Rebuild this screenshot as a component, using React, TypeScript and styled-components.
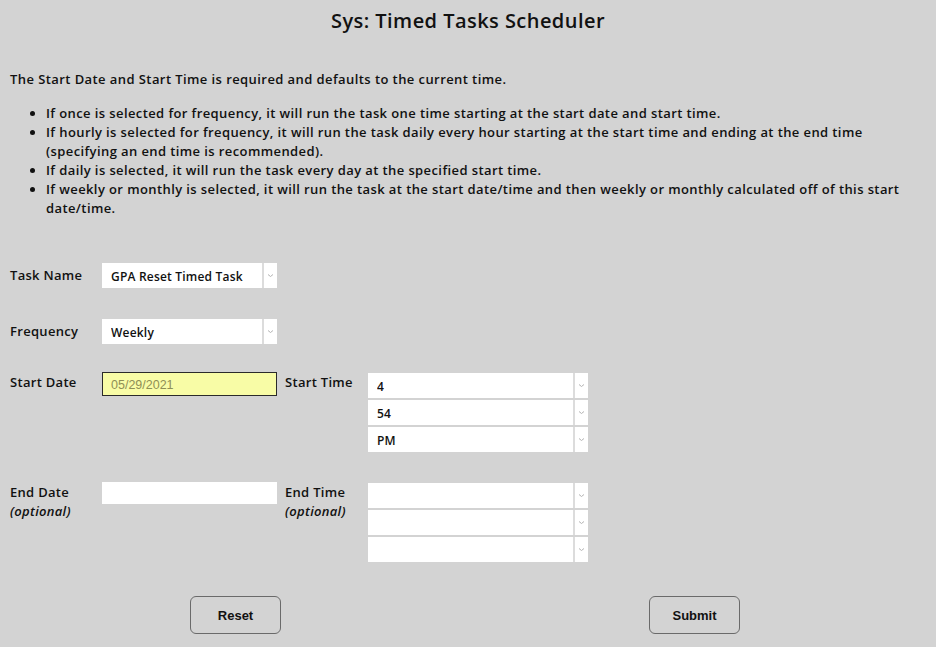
import React, { useState } from "react";
import styled, { createGlobalStyle } from "styled-components";

const GlobalStyle = createGlobalStyle`
    body {
        margin: 0;
        background-color: #d3d3d3;
        font-family: "Open Sans", Lato, sans-serif;
        color: #111111;
    }
`;

const Page = styled.div`
    width: 936px;
    min-height: 647px;
    box-sizing: border-box;
    padding: 0 10px;
`;

const Title = styled.h1`
    margin: 0;
    padding-top: 8px;
    height: 25px;
    line-height: 25px;
    text-align: center;
    font-size: 20px;
    font-weight: 600;
    letter-spacing: 0.45px;
`;

const Intro = styled.p`
    margin: 37px 0 0;
    font-size: 13px;
    font-weight: 600;
    line-height: 19px;
    letter-spacing: 0.42px;
`;

const Notes = styled.ul`
    margin: 15px 0 0;
    padding-left: 36px;
    font-size: 13px;
    font-weight: 600;
    line-height: 19px;
    letter-spacing: 0.4px;
`;

const Form = styled.div`
    display: flex;
    flex-direction: column;
    margin-top: 45px;
`;

const Row = styled.div<{ $top?: number }>`
    display: grid;
    grid-template-columns: 92px 175px 91px 220px;
    align-items: start;
    margin-top: ${({ $top }) => $top ?? 0}px;
`;

const Label = styled.div<{ $pad?: number }>`
    padding-top: ${({ $pad }) => $pad ?? 1}px;
    font-size: 13px;
    font-weight: 600;
    line-height: 19px;
    letter-spacing: 0.3px;
`;

const SideLabel = styled(Label)`
    padding-left: 8px;
`;

const Optional = styled.span`
    display: block;
    font-style: italic;
`;

const SelectStack = styled.div`
    display: flex;
    flex-direction: column;
    gap: 2px;
    margin-top: 1px;
`;

const SelectBox = styled.div`
    display: flex;
    height: 25px;
    background-color: #ffffff;
`;

const NativeSelect = styled.select`
    flex: 1;
    min-width: 0;
    appearance: none;
    border: none;
    outline: none;
    background: transparent;
    padding: 2px 0 0 9px;
    font-family: "Open Sans", Lato, sans-serif;
    font-size: 12px;
    font-weight: 600;
    letter-spacing: 0.2px;
    color: #111111;
`;

const ArrowCell = styled.div`
    width: 13px;
    display: flex;
    align-items: center;
    justify-content: center;
    border-left: 2px solid #dcdcdc;
`;

const DateInput = styled.input<{ $filled?: boolean }>`
    box-sizing: border-box;
    width: 175px;
    height: ${({ $filled }) => ($filled ? 24 : 22)}px;
    margin: 0;
    padding: 1px 0 0 8px;
    border: ${({ $filled }) => ($filled ? "1px solid #2a2a2a" : "none")};
    background-color: ${({ $filled }) => ($filled ? "#f8fca6" : "#ffffff")};
    color: #8f8f55;
    font-family: "Liberation Sans", Arial, sans-serif;
    font-size: 12.5px;
    outline: none;
`;

const ButtonRow = styled.div`
    display: flex;
    gap: 368px;
    margin: 34px 0 0 180px;
`;

const Button = styled.button`
    width: 91px;
    height: 38px;
    background-color: transparent;
    border: 1px solid #6a6a6a;
    border-radius: 6px;
    color: #111111;
    font-family: "Liberation Sans", Arial, sans-serif;
    font-size: 13px;
    font-weight: 700;
    cursor: pointer;
`;

const Chevron = () => (
    <svg width="7" height="5" viewBox="0 0 7 5">
        <path d="M1 1.5 L3.5 3.5 L6 1.5" fill="none" stroke="#b4b4b4" strokeWidth="1" />
    </svg>
);

interface DropProps {
    value: string;
    options: string[];
    onChange?: (v: string) => void;
}

const Drop: React.FC<DropProps> = ({ value, options, onChange }) => (
    <SelectBox>
        <NativeSelect value={value} onChange={(e) => onChange?.(e.target.value)}>
            {options.map((o) => (
                <option key={o} value={o}>
                    {o}
                </option>
            ))}
        </NativeSelect>
        <ArrowCell>
            <Chevron />
        </ArrowCell>
    </SelectBox>
);

const HOURS = ["", ...Array.from({ length: 12 }, (_, i) => String(i + 1))];
const MINUTES = ["", ...Array.from({ length: 60 }, (_, i) => String(i))];
const MERIDIEM = ["", "AM", "PM"];
const FREQUENCIES = ["Once", "Hourly", "Daily", "Weekly", "Monthly"];

const App: React.FC = () => {
    const [task, setTask] = useState("GPA Reset Timed Task");
    const [frequency, setFrequency] = useState("Weekly");
    const [start, setStart] = useState({ h: "4", m: "54", p: "PM" });
    const [end, setEnd] = useState({ h: "", m: "", p: "" });

    return (
        <Page>
            <GlobalStyle />
            <Title>Sys: Timed Tasks Scheduler</Title>
            <Intro>The Start Date and Start Time is required and defaults to the current time.</Intro>
            <Notes>
                <li>If once is selected for frequency, it will run the task one time starting at the start date and start time.</li>
                <li>
                    If hourly is selected for frequency, it will run the task daily every hour starting at the start time and ending at the end time
                    (specifying an end time is recommended).
                </li>
                <li>If daily is selected, it will run the task every day at the specified start time.</li>
                <li>
                    If weekly or monthly is selected, it will run the task at the start date/time and then weekly or monthly calculated off of this start
                    date/time.
                </li>
            </Notes>

            <Form>
                <Row>
                    <Label $pad={3}>Task Name</Label>
                    <Drop value={task} options={["GPA Reset Timed Task"]} onChange={setTask} />
                </Row>
                <Row $top={31}>
                    <Label $pad={3}>Frequency</Label>
                    <Drop value={frequency} options={FREQUENCIES} onChange={setFrequency} />
                </Row>
                <Row $top={28}>
                    <Label>Start Date</Label>
                    <DateInput $filled defaultValue="05/29/2021" />
                    <SideLabel>Start Time</SideLabel>
                    <SelectStack>
                        <Drop value={start.h} options={HOURS} onChange={(h) => setStart({ ...start, h })} />
                        <Drop value={start.m} options={MINUTES} onChange={(m) => setStart({ ...start, m })} />
                        <Drop value={start.p} options={MERIDIEM} onChange={(p) => setStart({ ...start, p })} />
                    </SelectStack>
                </Row>
                <Row $top={30}>
                    <Label>
                        End Date
                        <Optional>(optional)</Optional>
                    </Label>
                    <DateInput />
                    <SideLabel>
                        End Time
                        <Optional>(optional)</Optional>
                    </SideLabel>
                    <SelectStack>
                        <Drop value={end.h} options={HOURS} onChange={(h) => setEnd({ ...end, h })} />
                        <Drop value={end.m} options={MINUTES} onChange={(m) => setEnd({ ...end, m })} />
                        <Drop value={end.p} options={MERIDIEM} onChange={(p) => setEnd({ ...end, p })} />
                    </SelectStack>
                </Row>
            </Form>

            <ButtonRow>
                <Button type="button">Reset</Button>
                <Button type="button">Submit</Button>
            </ButtonRow>
        </Page>
    );
};

export default App;
